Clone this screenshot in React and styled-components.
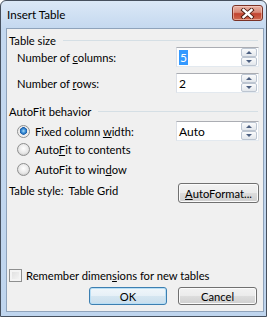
import styled, { createGlobalStyle } from "styled-components";

const GlobalStyle = createGlobalStyle`
  html, body {
    margin: 0;
    padding: 0;
    background: #ffffff;
  }
  body {
    font-family: Lato, "Noto Sans", sans-serif;
    font-size: 11.2px;
    color: #000;
  }
`;

const InsertTableDialog = () => {
  return (
    <Window>
      <GlobalStyle />
      <TitleBar>
        <Title>Insert Table</Title>
        <CloseButton aria-label="Close">
          <svg width="15" height="11" viewBox="0 0 15 11">
            <path d="M3.5 2 L11.5 9 M11.5 2 L3.5 9" stroke="#4a1c12" strokeWidth="4.2" strokeLinecap="square" />
            <path d="M3.5 2 L11.5 9 M11.5 2 L3.5 9" stroke="#ffffff" strokeWidth="2.4" strokeLinecap="square" />
          </svg>
        </CloseButton>
      </TitleBar>

      <Client>
        <GroupHeader>Table size</GroupHeader>
        <FieldRow>
          <span>Number of <u>c</u>olumns:</span>
          <SpinInput value="5" selected />
        </FieldRow>
        <FieldRow $gap={6}>
          <span>Number of <u>r</u>ows:</span>
          <SpinInput value="2" />
        </FieldRow>

        <GroupHeader $gap={11}>AutoFit behavior</GroupHeader>
        <FieldRow $gap={3}>
          <RadioOption checked>
            Fixed column <u>w</u>idth:
          </RadioOption>
          <SpinInput value="Auto" />
        </FieldRow>
        <RadioRow>
          <RadioOption>
            Auto<u>F</u>it to contents
          </RadioOption>
        </RadioRow>
        <RadioRow $gap={4}>
          <RadioOption>
            AutoFit to win<u>d</u>ow
          </RadioOption>
        </RadioRow>

        <StyleRow>
          <StyleLabel>
            <span>Table style:</span>
            <span>Table Grid</span>
          </StyleLabel>
          <Button $w={81} $h={20}>
            <u>A</u>utoFormat...
          </Button>
        </StyleRow>

        <Spacer />

        <CheckRow>
          <CheckBox />
          <span>
            Remember dimen<u>s</u>ions for new tables
          </span>
        </CheckRow>
        <ButtonRow>
          <Button $w={78} $default>
            OK
          </Button>
          <Button $w={79}>Cancel</Button>
        </ButtonRow>
      </Client>
    </Window>
  );
};

const SpinInput = ({ value, selected }) => {
  return (
    <InputBox>
      <InputText>{selected ? <Selection>{value}</Selection> : value}</InputText>
      <Spinner>
        <SpinButton>
          <Arrow $up />
        </SpinButton>
        <SpinButton>
          <Arrow />
        </SpinButton>
      </Spinner>
    </InputBox>
  );
};

const RadioOption = ({ checked, children }) => {
  return (
    <RadioLabel>
      <RadioCircle $checked={checked} />
      <span>{children}</span>
    </RadioLabel>
  );
};

const Window = styled.div`
  width: 267px;
  height: 317px;
  box-sizing: border-box;
  border: 1px solid #46505e;
  border-radius: 6px 6px 0 0;
  background: linear-gradient(#dbe8f7 0px, #c4d8ef 28px, #bfd5ee 100%);
  display: flex;
  flex-direction: column;
  overflow: hidden;
`;

const TitleBar = styled.div`
  height: 27px;
  flex: none;
  display: flex;
  justify-content: space-between;
  align-items: flex-start;
  padding: 0 3px 0 6px;
`;

const Title = styled.div`
  font-size: 11.6px;
  line-height: 16px;
  margin-top: 6px;
  color: #000;
`;

const CloseButton = styled.div`
  width: 31px;
  height: 16px;
  margin-top: 4px;
  box-sizing: border-box;
  border: 1px solid #7a3226;
  border-radius: 3px;
  background: linear-gradient(#e8b3a6 0%, #d88a78 45%, #c2432f 55%, #cf6a50 100%);
  box-shadow: inset 0 0 0 1px rgba(255, 220, 210, 0.5);
  display: flex;
  align-items: center;
  justify-content: center;
`;

const Client = styled.div`
  flex: 1;
  margin: 0 2px 4px 5px;
  border: 1px solid #8fa3bb;
  background: #f0f0f0;
  padding: 4px 4px 6px 2px;
  display: flex;
  flex-direction: column;
  line-height: 15px;
`;

const GroupHeader = styled.div`
  height: 14px;
  margin-top: ${(p) => p.$gap || 0}px;
  display: flex;
  align-items: center;
  gap: 7px;

  &::after {
    content: "";
    flex: 1;
    height: 1px;
    background: #d5dfe5;
    margin-right: 1px;
  }
`;

const FieldRow = styled.div`
  display: flex;
  align-items: center;
  justify-content: space-between;
  padding-left: 8px;
  margin-top: ${(p) => p.$gap || 0}px;
`;

const InputBox = styled.div`
  width: 83px;
  height: 20px;
  box-sizing: border-box;
  border: 1px solid;
  border-color: #abadb3 #e3e9ef #e3e9ef #dbdfe6;
  background: #ffffff;
  display: flex;
  align-items: center;
`;

const InputText = styled.div`
  flex: 1;
  padding-left: 2px;
  font-size: 12px;
`;

const Selection = styled.span`
  display: inline-block;
  background: #3399ff;
  color: #ffffff;
  padding: 0 1px;
  line-height: 15px;
`;

const Spinner = styled.div`
  width: 16px;
  height: 18px;
  margin-right: 1px;
  display: flex;
  flex-direction: column;
`;

const SpinButton = styled.div`
  flex: 1;
  box-sizing: border-box;
  border: 1px solid #bcc5d1;
  border-radius: 2px;
  background: linear-gradient(#fafbfc, #e3e7ec);
  display: flex;
  align-items: center;
  justify-content: center;
`;

const Arrow = styled.div`
  width: 0;
  height: 0;
  border-left: 3px solid transparent;
  border-right: 3px solid transparent;
  ${(p) =>
    p.$up ? "border-bottom: 3px solid #4c5f80;" : "border-top: 3px solid #4c5f80;"}
`;

const RadioRow = styled.div`
  height: 16px;
  display: flex;
  align-items: center;
  padding-left: 8px;
  margin-top: ${(p) => p.$gap || 0}px;
`;

const RadioLabel = styled.label`
  display: flex;
  align-items: center;
  gap: 5px;
`;

const RadioCircle = styled.span`
  width: 13px;
  height: 13px;
  box-sizing: border-box;
  border-radius: 50%;
  border: 1px solid #8e8f8f;
  background: ${(p) =>
    p.$checked
      ? "radial-gradient(circle at 50% 45%, #a9dcf8 0px, #3c8fd6 2px, #1c5eaa 3.5px, #e8e8e8 4px, #f6f6f6 6px)"
      : "radial-gradient(circle at 50% 40%, #ffffff 0px, #e6e6e6 5px, #d4d4d4 6px)"};
`;

const StyleRow = styled.div`
  display: flex;
  align-items: flex-start;
  justify-content: space-between;
  margin-top: 6px;
`;

const StyleLabel = styled.div`
  display: flex;
  gap: 5px;
`;

const Spacer = styled.div`
  flex: 1;
`;

const CheckRow = styled.div`
  display: flex;
  align-items: center;
  gap: 4px;
  height: 14px;
`;

const CheckBox = styled.span`
  width: 13px;
  height: 13px;
  box-sizing: border-box;
  border: 1px solid #8e8f8f;
  background: linear-gradient(135deg, #dcdcdc, #f8f8f8);
  box-shadow: inset 0 0 0 2px #f4f4f4;
`;

const ButtonRow = styled.div`
  display: flex;
  justify-content: flex-end;
  gap: 11px;
  margin-top: 5px;
  padding-right: 2px;
`;

const Button = styled.div`
  width: ${(p) => p.$w}px;
  height: ${(p) => p.$h || 18}px;
  box-sizing: border-box;
  border: 1px solid ${(p) => (p.$default ? "#3c7fb1" : "#707070")};
  border-radius: 3px;
  background: ${(p) =>
    p.$default
      ? "linear-gradient(#f0f6fa 0%, #e6f0f7 49%, #d5e6f1 50%, #c9deec 100%)"
      : "linear-gradient(#f2f2f2 0%, #ebebeb 49%, #dddddd 50%, #cfcfcf 100%)"};
  box-shadow: inset 0 0 0 1px ${(p) => (p.$default ? "#b8def5" : "#fbfbfb")};
  display: flex;
  align-items: center;
  justify-content: center;
  color: #000;
`;

export default InsertTableDialog;
